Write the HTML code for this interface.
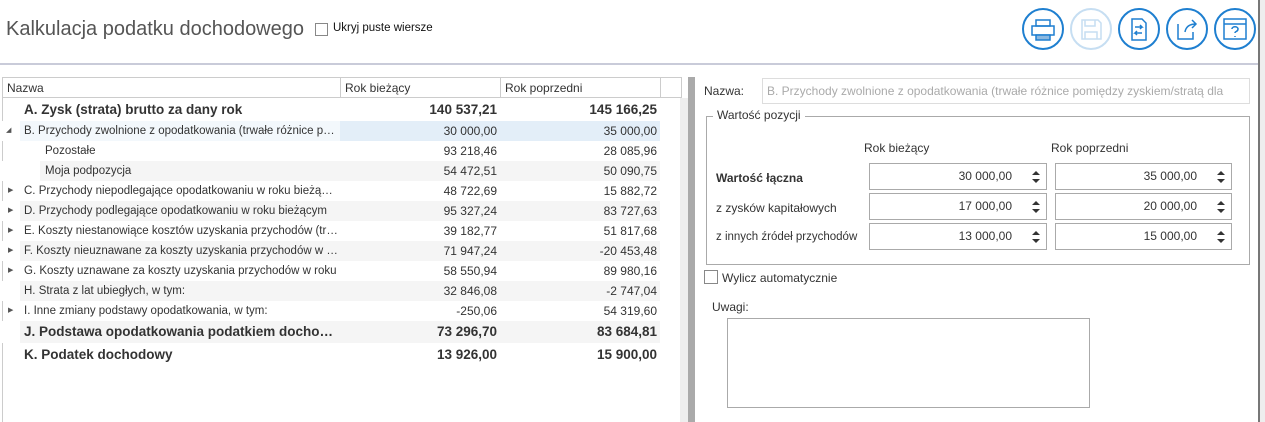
<!DOCTYPE html>
<html><head><meta charset="utf-8"><style>
*{margin:0;padding:0;box-sizing:border-box}
body{width:1265px;height:422px;position:relative;overflow:hidden;background:#fff;font-family:"Liberation Sans",sans-serif;font-size:12px;color:#333}
.a{position:absolute;white-space:nowrap}
.row{position:absolute;left:0;width:680px;height:20px;line-height:20px;white-space:nowrap}
.row .n{position:absolute;left:0;overflow:hidden;width:338px;text-overflow:ellipsis;font-size:11.5px}
.row .v1{position:absolute;right:183px;text-align:right}
.row .v2{position:absolute;right:23px;text-align:right}
.row .b{font-weight:bold;font-size:13.5px}
.tri{font-size:7px;color:#555;position:absolute}
.inp{position:absolute;height:27px;border:1px solid #aaa;background:#fff;text-align:right;line-height:25px;padding-right:34px;font-size:12px}
.sp{position:absolute;right:6px;top:6px;width:8px;height:14px}
</style></head><body>
<div class="a" style="left:6px;top:18px;font-size:20px;color:#555">Kalkulacja podatku dochodowego</div>
<div class="a" style="left:315px;top:23px;width:13px;height:13px;border:1px solid #888"></div>
<div class="a" style="left:333px;top:22px;font-size:11.5px;color:#111">Ukryj puste wiersze</div>

<svg class="a" style="left:1020px;top:6px" width="240" height="48" viewBox="0 0 240 48">
<g fill="none" stroke="#1e7fd0" stroke-width="2">
<circle cx="23" cy="23" r="20"/>
<circle cx="71" cy="23" r="20" stroke="#c6def2"/>
<circle cx="119" cy="23" r="20"/>
<circle cx="167" cy="23" r="20"/>
<circle cx="215" cy="23" r="20"/>
</g>
<g fill="none" stroke="#1e7fd0" stroke-width="1.5">
<rect x="16" y="14" width="14" height="6"/><rect x="12" y="20" width="22" height="9"/><rect x="16" y="29" width="14" height="5" fill="#8bb8e0"/>
<path d="M62 14h16l3 3v16h-19z M65 14v6h10v-6 M65 33v-7h12v7" stroke="#c6def2"/>
<path d="M112 13h10l4 4v17h-14z M115 21h7l-2-2 M122 21l-2 2 M122 27h-7l2-2 M115 27l2 2"/>
<path d="M158 18v15h15v-7 M165 26c1-6 5-8 11-8 M172 14l4 4-4 4"/>
<rect x="204" y="13" width="22" height="20"/><path d="M204 18h22 M212 23c0-3 6-3 6 0s-3 2-3 4 M215 30v1"/>
</g></svg>

<div class="a" style="left:0;top:63px;width:1258px;height:2px;background:#c9cbd9"></div>
<div class="a" style="left:1258px;top:0;width:2px;height:422px;background:#777"></div>
<div class="a" style="left:1260px;top:0;width:5px;height:422px;background:#eee"></div>

<div class="a" style="left:2px;top:77px;width:680px;height:345px;border:1px solid #ccc;border-bottom:none"></div>
<div class="a" style="left:2px;top:77px;width:680px;height:21px;border-bottom:1px solid #ccc"></div>
<div class="a" style="left:340px;top:77px;width:1px;height:21px;background:#ccc"></div>
<div class="a" style="left:500px;top:77px;width:1px;height:21px;background:#ccc"></div>
<div class="a" style="left:660px;top:77px;width:1px;height:21px;background:#ccc"></div>
<div class="a" style="left:7px;top:81px">Nazwa</div>
<div class="a" style="left:345px;top:81px">Rok bieżący</div>
<div class="a" style="left:505px;top:81px">Rok poprzedni</div>
<div class="a" style="left:680px;top:98px;width:8px;height:324px;background:#eee"></div>
<div class="a" style="left:688px;top:77px;width:7px;height:345px;background:#aaa"></div>

<div class="row" style="top:99px;height:22px;line-height:22px"><span class="n b" style="left:24px">A. Zysk (strata) brutto za dany rok</span><span class="v1 b">140 537,21</span><span class="v2 b">145 166,25</span></div>
<div class="row" style="top:121px;background:linear-gradient(90deg,#fff 0 20px,#f3f8fc 20px 340px,#e3eef8 340px 660px,#fff 660px)"><span class="tri" style="left:6px;top:0">◢</span><span class="n" style="left:24px;width:312px">B. Przychody zwolnione z opodatkowania (trwałe różnice pomiędzy</span><span class="v1">30 000,00</span><span class="v2">35 000,00</span></div>
<div class="row" style="top:141px"><span class="n" style="left:45px">Pozostałe</span><span class="v1">93 218,46</span><span class="v2">28 085,96</span></div>
<div class="row" style="top:161px;background:linear-gradient(90deg,#fff 0 40px,#f5f5f5 40px 660px,#fff 660px)"><span class="n" style="left:45px">Moja podpozycja</span><span class="v1">54 472,51</span><span class="v2">50 090,75</span></div>
<div class="row" style="top:181px"><span class="tri" style="left:8px">▶</span><span class="n" style="left:24px;width:314px">C. Przychody niepodlegające opodatkowaniu w roku bieżącym</span><span class="v1">48 722,69</span><span class="v2">15 882,72</span></div>
<div class="row" style="top:201px;background:linear-gradient(90deg,#fff 0 20px,#f5f5f5 20px 660px,#fff 660px)"><span class="tri" style="left:8px">▶</span><span class="n" style="left:24px;width:314px">D. Przychody podlegające opodatkowaniu w roku bieżącym</span><span class="v1">95 327,24</span><span class="v2">83 727,63</span></div>
<div class="row" style="top:221px"><span class="tri" style="left:8px">▶</span><span class="n" style="left:24px;width:314px">E. Koszty niestanowiące kosztów uzyskania przychodów (trwałe</span><span class="v1">39 182,77</span><span class="v2">51 817,68</span></div>
<div class="row" style="top:241px;background:linear-gradient(90deg,#fff 0 20px,#f5f5f5 20px 660px,#fff 660px)"><span class="tri" style="left:8px">▶</span><span class="n" style="left:24px;width:314px">F. Koszty nieuznawane za koszty uzyskania przychodów w roku</span><span class="v1">71 947,24</span><span class="v2">-20 453,48</span></div>
<div class="row" style="top:261px"><span class="tri" style="left:8px">▶</span><span class="n" style="left:24px;width:314px">G. Koszty uznawane za koszty uzyskania przychodów w roku</span><span class="v1">58 550,94</span><span class="v2">89 980,16</span></div>
<div class="row" style="top:281px;background:linear-gradient(90deg,#fff 0 20px,#f5f5f5 20px 660px,#fff 660px)"><span class="n" style="left:24px">H. Strata z lat ubiegłych, w tym:</span><span class="v1">32 846,08</span><span class="v2">-2 747,04</span></div>
<div class="row" style="top:301px"><span class="tri" style="left:8px">▶</span><span class="n" style="left:24px">I. Inne zmiany podstawy opodatkowania, w tym:</span><span class="v1">-250,06</span><span class="v2">54 319,60</span></div>
<div class="row" style="top:321px;height:22px;line-height:22px;background:linear-gradient(90deg,#fff 0 20px,#f5f5f5 20px 660px,#fff 660px)"><span class="n b" style="left:24px;width:314px">J. Podstawa opodatkowania podatkiem dochodowym</span><span class="v1 b">73 296,70</span><span class="v2 b">83 684,81</span></div>
<div class="row" style="top:344px;height:22px;line-height:22px"><span class="n b" style="left:24px">K. Podatek dochodowy</span><span class="v1 b">13 926,00</span><span class="v2 b">15 900,00</span></div>

<div class="a" style="left:704px;top:84px">Nazwa:</div>
<div class="a" style="left:762px;top:78px;width:488px;height:26px;border:1px solid #ddd;color:#aaa;padding:5px 0 0 4px;overflow:hidden">B. Przychody zwolnione z opodatkowania (trwałe różnice pomiędzy zyskiem/stratą dla</div>
<div class="a" style="left:706px;top:116px;width:544px;height:149px;border:1px solid #aaa"></div>
<div class="a" style="left:713px;top:108px;background:#fff;padding:0 4px">Wartość pozycji</div>
<div class="a" style="left:864px;top:141px">Rok bieżący</div>
<div class="a" style="left:1051px;top:141px">Rok poprzedni</div>
<div class="a" style="left:716px;top:171px;font-weight:bold">Wartość łączna</div>
<div class="a" style="left:716px;top:201px">z zysków kapitałowych</div>
<div class="a" style="left:716px;top:231px;font-size:11.5px">z innych źródeł przychodów</div>

<div class="inp" style="left:869px;top:163px;width:178px">30 000,00<svg class="sp" viewBox="0 0 8 14"><path d="M0 5l4-4 4 4zM0 9l4 4 4-4z" fill="#333"/></svg></div>
<div class="inp" style="left:1055px;top:163px;width:177px">35 000,00<svg class="sp" viewBox="0 0 8 14"><path d="M0 5l4-4 4 4zM0 9l4 4 4-4z" fill="#333"/></svg></div>
<div class="inp" style="left:869px;top:193px;width:178px">17 000,00<svg class="sp" viewBox="0 0 8 14"><path d="M0 5l4-4 4 4zM0 9l4 4 4-4z" fill="#333"/></svg></div>
<div class="inp" style="left:1055px;top:193px;width:177px">20 000,00<svg class="sp" viewBox="0 0 8 14"><path d="M0 5l4-4 4 4zM0 9l4 4 4-4z" fill="#333"/></svg></div>
<div class="inp" style="left:869px;top:223px;width:178px">13 000,00<svg class="sp" viewBox="0 0 8 14"><path d="M0 5l4-4 4 4zM0 9l4 4 4-4z" fill="#333"/></svg></div>
<div class="inp" style="left:1055px;top:223px;width:177px">15 000,00<svg class="sp" viewBox="0 0 8 14"><path d="M0 5l4-4 4 4zM0 9l4 4 4-4z" fill="#333"/></svg></div>

<div class="a" style="left:704px;top:270px;width:14px;height:14px;border:1px solid #888"></div>
<div class="a" style="left:722px;top:271px">Wylicz automatycznie</div>
<div class="a" style="left:712px;top:300px">Uwagi:</div>
<div class="a" style="left:727px;top:318px;width:363px;height:90px;border:1px solid #aaa"></div>
</body></html>
